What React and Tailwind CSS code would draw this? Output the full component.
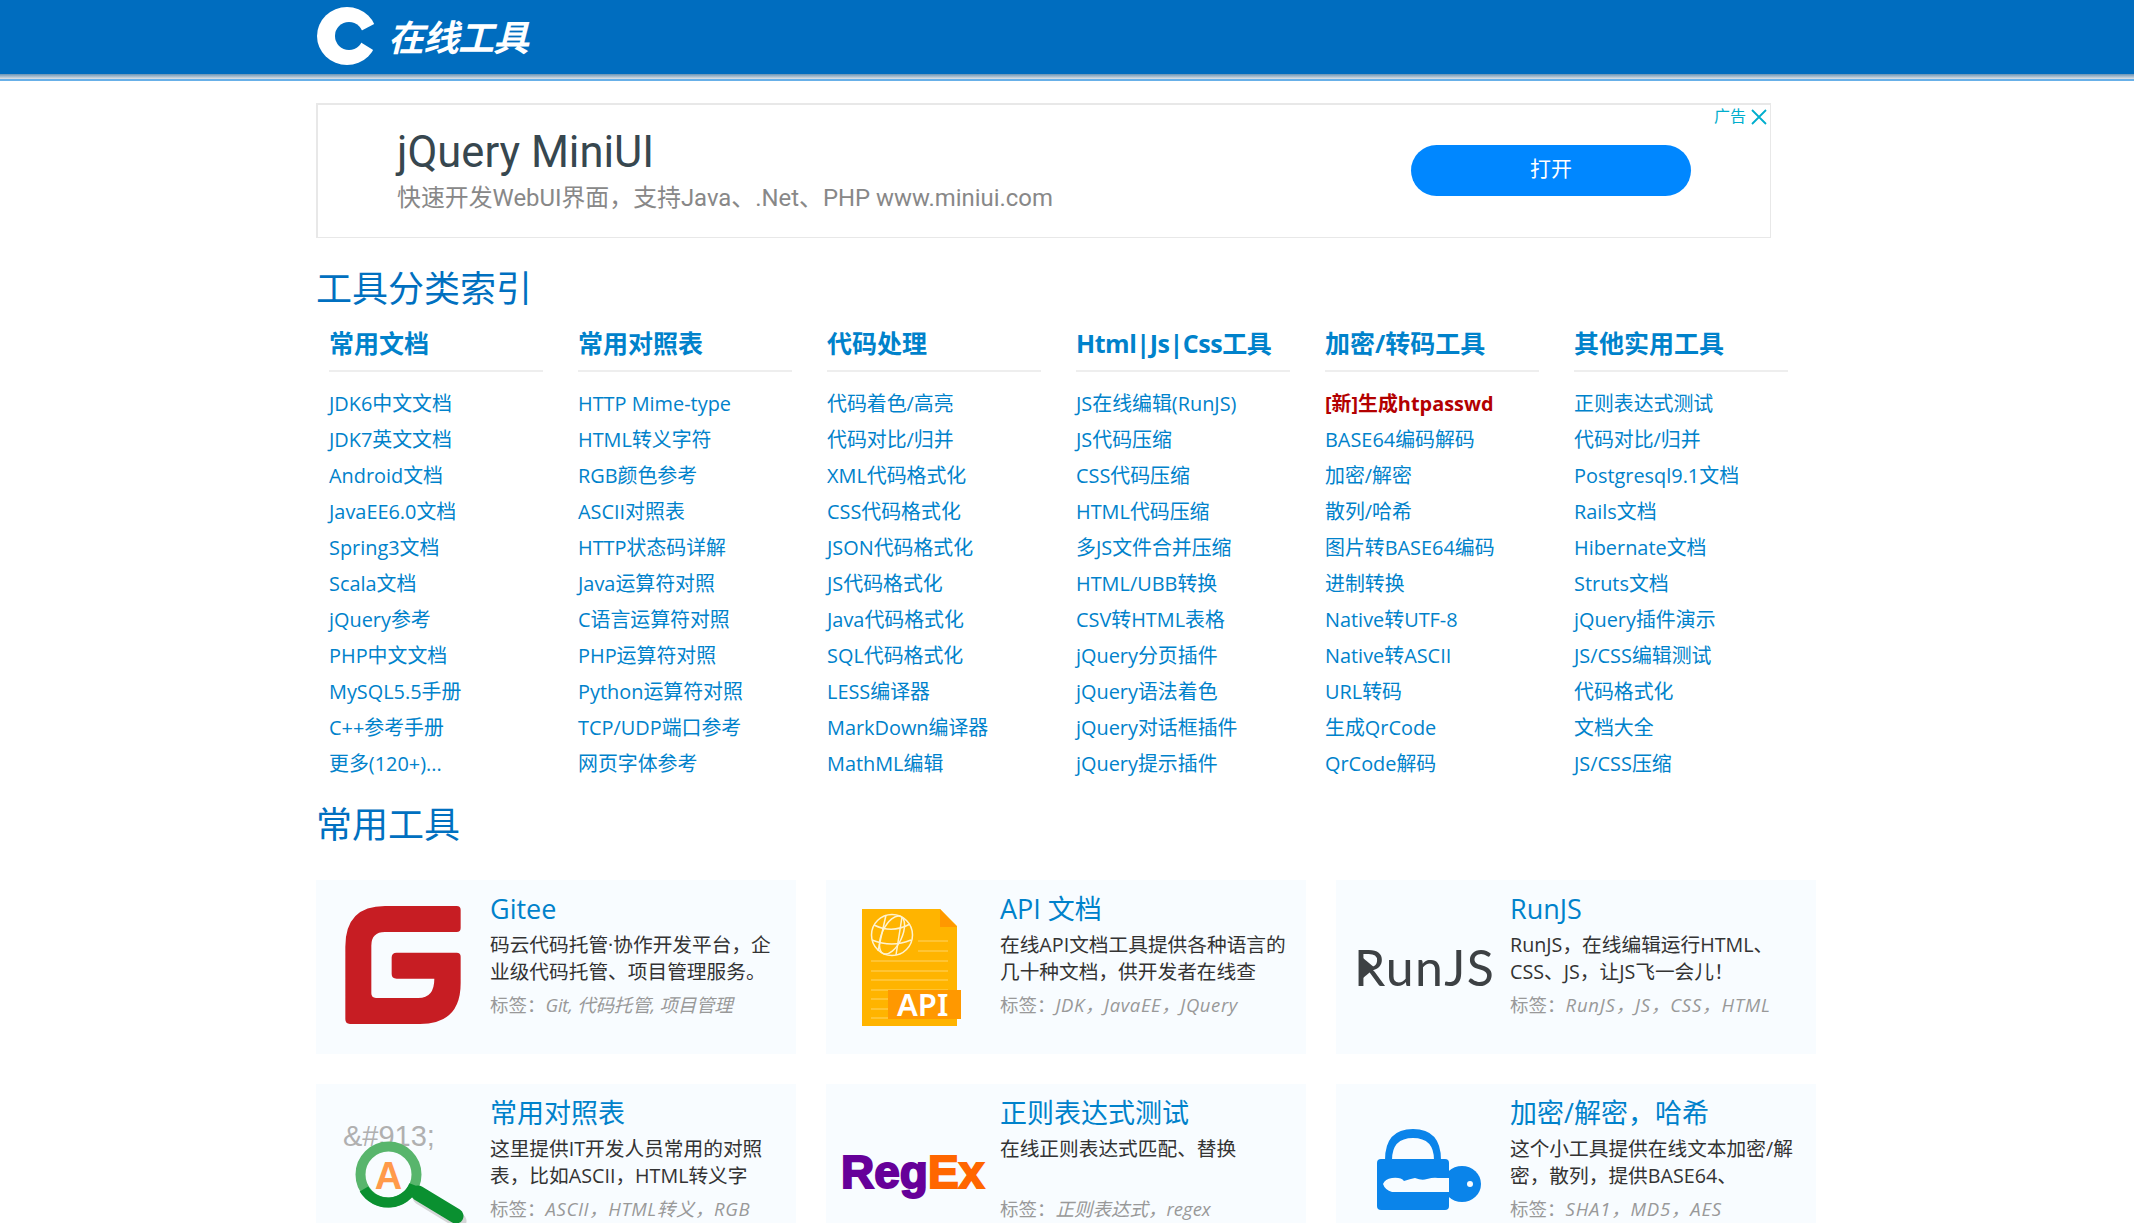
const cols = [
  { h: '常用文档', items: ['JDK6中文文档','JDK7英文文档','Android文档','JavaEE6.0文档','Spring3文档','Scala文档','jQuery参考','PHP中文文档','MySQL5.5手册','C++参考手册','更多(120+)...'] },
  { h: '常用对照表', items: ['HTTP Mime-type','HTML转义字符','RGB颜色参考','ASCII对照表','HTTP状态码详解','Java运算符对照','C语言运算符对照','PHP运算符对照','Python运算符对照','TCP/UDP端口参考','网页字体参考'] },
  { h: '代码处理', items: ['代码着色/高亮','代码对比/归并','XML代码格式化','CSS代码格式化','JSON代码格式化','JS代码格式化','Java代码格式化','SQL代码格式化','LESS编译器','MarkDown编译器','MathML编辑'] },
  { h: 'Html|Js|Css工具', tight: true, items: ['JS在线编辑(RunJS)','JS代码压缩','CSS代码压缩','HTML代码压缩','多JS文件合并压缩','HTML/UBB转换','CSV转HTML表格','jQuery分页插件','jQuery语法着色','jQuery对话框插件','jQuery提示插件'] },
  { h: '加密/转码工具', items: ['[新]生成htpasswd','BASE64编码解码','加密/解密','散列/哈希','图片转BASE64编码','进制转换','Native转UTF-8','Native转ASCII','URL转码','生成QrCode','QrCode解码'] },
  { h: '其他实用工具', items: ['正则表达式测试','代码对比/归并','Postgresql9.1文档','Rails文档','Hibernate文档','Struts文档','jQuery插件演示','JS/CSS编辑测试','代码格式化','文档大全','JS/CSS压缩'] },
];

const GiteeIcon = () => (
  <g transform="translate(29 26) scale(0.3333)">
    <path fill="#c71d23" d="M120 0H335q12 0 12 12V66q0 12-12 12H120q-41 0-41 41V262q0 14 14 14H220q48 0 48-58H155q-15 0-15-14V154q0-14 15-14H335q12 0 12 12V232q0 122-122 122H15q-14 0-14-14V122Q1 0 120 0Z" />
  </g>
);

const ApiIcon = () => (
  <g>
    <path fill="#ffb400" d="M36 29H114L131 46V146H36Z" />
    <path fill="#ff9800" d="M114 29L131 47H114Z" />
    <g stroke="#ffd466" strokeWidth="1">
      <path d="M92 61H122M92 71H122M45 81H122M45 91H122M45 100H122M45 110H122M45 119H62M45 129H62M45 138H62" fill="none" />
    </g>
    <g fill="none" stroke="#fff3d0" strokeWidth="1.5">
      <circle cx="66" cy="55" r="20.5" />
      <ellipse cx="66" cy="55" rx="10" ry="20.5" transform="rotate(25 66 55)" />
      <path d="M48 45Q66 54 84 44M46 60Q66 68 85 60M60 35L52 71M76 37L70 75" />
    </g>
    <rect x="62" y="110" width="73" height="29" fill="#ff9800" />
    <text x="71" y="136" fill="#fff" fontSize="31" fontWeight="600" className="[font-family:'Noto_Sans',sans-serif]">API</text>
  </g>
);

const RunIcon = () => (
  <g>
    <text x="18" y="106" fill="#3d4144" fontSize="50" fontWeight="400" letterSpacing="1.4" className="[font-family:'Lato',sans-serif]">RunJS</text>
    <path fill="#3d4144" d="M27 78L39 88L27 98Z" />
  </g>
);

const TableIcon = () => (
  <g>
    <text x="27" y="62" fill="#b0b0b0" fontSize="29" className="[font-family:'Liberation_Sans',sans-serif]">&amp;#913;</text>
    <path d="M104 113L143 137" stroke="#bdbdbd" strokeWidth="15" strokeLinecap="round" opacity="0.6" />
    <circle cx="72.5" cy="90.5" r="28" fill="#f8fcff" fillOpacity="0.6" stroke="#58b56c" strokeWidth="10" />
    <path d="M48 105A28 28 0 0 0 98 101" fill="none" stroke="#0a9030" strokeWidth="10" />
    <path d="M102 109L140 132" stroke="#0a9030" strokeWidth="15" strokeLinecap="round" />
    <text x="72.5" y="105" textAnchor="middle" fill="#ff9a4a" fontSize="38" fontWeight="700" className="[font-family:'Liberation_Sans',sans-serif]">A</text>
  </g>
);

const RegexIcon = () => (
  <g className="[font-family:'Liberation_Sans',sans-serif]" fontWeight="700" fontSize="46">
    <text x="15" y="104" fill="#660099" stroke="#660099" strokeWidth="2">Reg</text>
    <text x="102" y="104" fill="#ff6600" stroke="#ff6600" strokeWidth="2">Ex</text>
  </g>
);

const LockIcon = () => (
  <g>
    <path d="M49 76Q49 45 77 45Q105 45 105 76H98Q98 54 77 54Q56 54 56 76Z" fill="#0a84ea" />
    <rect x="41" y="75" width="72" height="51" rx="4" fill="#0a84ea" />
    <ellipse cx="126" cy="100" rx="19" ry="18" fill="#0a84ea" />
    <circle cx="134" cy="100" r="3" fill="#f8fcff" />
    <path fill="#f8fcff" d="M47 100Q49 95 56 94Q65 93 68 97Q74 95 79 94Q86 97 91 95Q98 93 102 94H113V108H56Q49 106 47 100Z" />
  </g>
);

const cards = [
  { t: 'Gitee', d: ['码云代码托管·协作开发平台，企','业级代码托管、项目管理服务。'], tags: 'Git, 代码托管, 项目管理', I: GiteeIcon, tc: 'tracking-[-0.2px]' },
  { t: 'API 文档', d: ['在线API文档工具提供各种语言的','几十种文档，供开发者在线查'], tags: 'JDK，JavaEE，JQuery', I: ApiIcon, tc: 'tracking-[0.6px]' },
  { t: 'RunJS', d: ['RunJS，在线编辑运行HTML、','CSS、JS，让JS飞一会儿！'], tags: 'RunJS，JS，CSS，HTML', I: RunIcon, tc: 'tracking-[0.8px]' },
  { t: '常用对照表', d: ['这里提供IT开发人员常用的对照','表，比如ASCII，HTML转义字'], tags: 'ASCII，HTML转义，RGB', I: TableIcon, tc: 'tracking-[0.6px]' },
  { t: '正则表达式测试', d: ['在线正则表达式匹配、替换'], tags: '正则表达式，regex', I: RegexIcon, tc: 'tracking-normal' },
  { t: '加密/解密，哈希', d: ['这个小工具提供在线文本加密/解','密，散列，提供BASE64、'], tags: 'SHA1，MD5，AES', I: LockIcon, tc: 'tracking-[0.8px]' },
];

export default function App() {
  return (
    <div className="h-[1223px] overflow-hidden bg-white [font-family:'Open_Sans','Noto_Sans_CJK_SC',sans-serif] text-[19.9px]">
      <header>
        <div className="h-[74px] bg-[#006dbf] pl-[317px] flex items-center">
          <svg width="61" height="58" viewBox="0 0 61 58" className="shrink-0 -mt-[2px]">
            <ellipse cx="30" cy="29" rx="30" ry="29" fill="#fff" />
            <circle cx="32" cy="29" r="14" fill="#006dbf" />
            <path d="M61 15L40 26V33L61 46Z" fill="#006dbf" />
          </svg>
          <span className="ml-[10px] -mt-[5px] text-[36px] leading-none font-bold italic text-white tracking-[-1px] whitespace-nowrap [font-family:'Noto_Sans_CJK_SC',sans-serif]">在线工具</span>
        </div>
        <div className="h-[5px] bg-gradient-to-b from-[#6a94b4] to-[#e0e4e8]" />
        <div className="h-[2px] bg-[#68b0e8]" />
      </header>

      <main className="pl-[316px]">
        <section className="mt-[22px] w-[1455px] h-[135px] border-t-2 border-l-2 border-r border-b border-[#e8e8e8] relative flex items-center pl-[79px] pr-[79px] [font-family:'Roboto','Noto_Sans_CJK_SC',sans-serif]">
          <div className="flex-1">
            <div className="text-[43.5px] leading-[50px] text-[#37474f]">jQuery MiniUI</div>
            <div className="mt-[3px] text-[23.9px] leading-[34px] text-[#888]">快速开发WebUI界面，支持Java、.Net、PHP www.miniui.com</div>
          </div>
          <button className="-mt-[2px] w-[280px] h-[51px] rounded-full bg-[#0087ff] text-white text-[21px]">打开</button>
          <div className="absolute top-[2px] right-[3px] flex items-center gap-[5px] text-[#00aecd] text-[16px] leading-[20px]">
            <span>广告</span>
            <svg width="16" height="16" viewBox="0 0 16 16" fill="none" stroke="#00aecd" strokeWidth="1.8"><path d="M1 1L15 15M15 1L1 15" /></svg>
          </div>
        </section>

        <h2 className="mt-[27px] text-[36px] leading-[48px] text-[#0070c0]">工具分类索引</h2>

        <div className="mt-[13px] grid grid-cols-[repeat(6,249px)] pl-[13px]">
          {cols.map((c) => (
            <div key={c.h}>
              <h3 className={c.tight ? 'w-[214px] h-[46px] pb-[8px] border-b-2 border-[#eeeeee] text-[25px] leading-[34px] font-bold text-[#0082cb] whitespace-nowrap tracking-[-0.45px]' : 'w-[214px] h-[46px] pb-[8px] border-b-2 border-[#eeeeee] text-[25px] leading-[34px] font-bold text-[#0082cb] whitespace-nowrap'}>{c.h}</h3>
              <ul className="mt-[14px]">
                {c.items.map((it) => (
                  <li key={it} className={it.startsWith('[新]') ? 'h-[36px] leading-[36px] whitespace-nowrap font-bold text-[#b30000]' : 'h-[36px] leading-[36px] whitespace-nowrap text-[#0082cb]'}>{it}</li>
                ))}
              </ul>
            </div>
          ))}
        </div>

        <h2 className="mt-[19px] text-[36px] leading-[48px] text-[#0070c0]">常用工具</h2>

        <div className="mt-[31px] grid grid-cols-[repeat(3,480px)] gap-x-[30px] gap-y-[30px]">
          {cards.map((c) => (
            <div key={c.t} className="h-[174px] bg-[#f8fcff] flex">
              <svg width="174" height="174" viewBox="0 0 174 174" className="shrink-0"><c.I /></svg>
              <div className="pt-[10px]">
                <div className="text-[27px] leading-[38px] text-[#0082cb] whitespace-nowrap">{c.t}</div>
                <div className="h-[54px] mt-[3px] text-[19.7px] leading-[27px] text-[#333] whitespace-nowrap">
                  {c.d.map((l) => <div key={l}>{l}</div>)}
                </div>
                <div className="mt-[6px] text-[18.5px] leading-[27px] text-[#999] whitespace-nowrap">标签：<em className={c.tc}>{c.tags}</em></div>
              </div>
            </div>
          ))}
        </div>
      </main>
    </div>
  );
}
